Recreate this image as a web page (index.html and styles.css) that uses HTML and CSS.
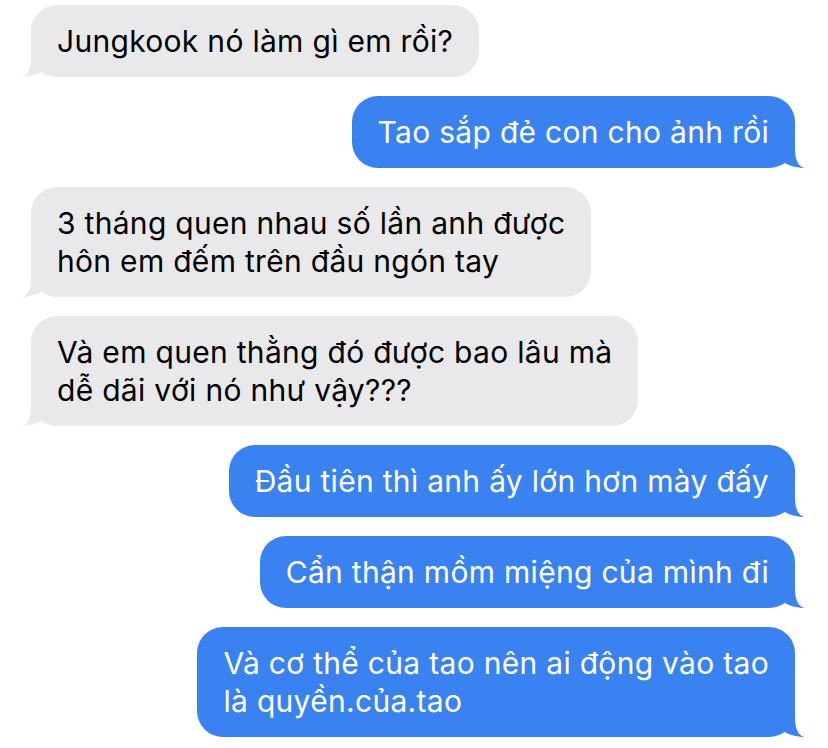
FILE: index.html
```html
<!doctype html>
<html lang="vi">
<head>
    <meta charset="UTF-8">
    <meta name="viewport" content="width=device-width, initial-scale=1.0">
    <title>Tin nhắn</title>
    <link rel="stylesheet" href="styles.css">
</head>
<body>
    <div class="chat">
        <div class="bubble them">
            Jungkook nó làm gì em rồi?
            <svg class="tail" viewBox="-9 -30 23 30"><path d="M0 -30 L0 -20 C0 -8 -3 -2 -9 0 C-3 0 6 -2 14 -7 L14 -30 Z"/></svg>
        </div>
        <div class="bubble me">
            Tao sắp đẻ con cho ảnh rồi
            <svg class="tail" viewBox="-14 -30 23 30"><path d="M0 -30 L0 -20 C0 -8 3 -2 9 0 C3 0 -6 -2 -14 -7 L-14 -30 Z"/></svg>
        </div>
        <div class="bubble them">
            3 tháng quen nhau số lần anh được<br>hôn em đếm trên đầu ngón tay
            <svg class="tail" viewBox="-9 -30 23 30"><path d="M0 -30 L0 -20 C0 -8 -3 -2 -9 0 C-3 0 6 -2 14 -7 L14 -30 Z"/></svg>
        </div>
        <div class="bubble them">
            Và em quen thằng đó được bao lâu mà<br>dễ dãi với nó như vậy???
            <svg class="tail" viewBox="-9 -30 23 30"><path d="M0 -30 L0 -20 C0 -8 -3 -2 -9 0 C-3 0 6 -2 14 -7 L14 -30 Z"/></svg>
        </div>
        <div class="bubble me">
            Đầu tiên thì anh ấy lớn hơn mày đấy
            <svg class="tail" viewBox="-14 -30 23 30"><path d="M0 -30 L0 -20 C0 -8 3 -2 9 0 C3 0 -6 -2 -14 -7 L-14 -30 Z"/></svg>
        </div>
        <div class="bubble me">
            Cẩn thận mồm miệng của mình đi
            <svg class="tail" viewBox="-14 -30 23 30"><path d="M0 -30 L0 -20 C0 -8 3 -2 9 0 C3 0 -6 -2 -14 -7 L-14 -30 Z"/></svg>
        </div>
        <div class="bubble me">
            Và cơ thể của tao nên ai động vào tao<br>là quyền.của.tao
            <svg class="tail" viewBox="-14 -30 23 30"><path d="M0 -30 L0 -20 C0 -8 3 -2 9 0 C3 0 -6 -2 -14 -7 L-14 -30 Z"/></svg>
        </div>
    </div>
</body>
</html>
```

FILE: styles.css
```css
body {
    margin: 0;
    background-color: #ffffff;
    font-family: Inter, "Noto Sans", sans-serif;
}

.chat {
    display: flex;
    flex-direction: column;
    gap: 19px;
    padding: 5px 33px 0 31px;
}

.bubble {
    position: relative;
    max-width: 680px;
    padding: 17px 26px;
    border-radius: 26px;
    font-size: 30px;
    line-height: 38px;
    letter-spacing: 0.3px;
}

.them {
    align-self: flex-start;
    background-color: #e9e9eb;
    color: #000000;
}

.me {
    align-self: flex-end;
    background-color: #3a82f0;
    color: #ffffff;
}

.tail {
    position: absolute;
    bottom: 0;
    width: 23px;
    height: 30px;
}

.them .tail {
    left: -9px;
    fill: #e9e9eb;
}

.me .tail {
    right: -9px;
    fill: #3a82f0;
}
```
